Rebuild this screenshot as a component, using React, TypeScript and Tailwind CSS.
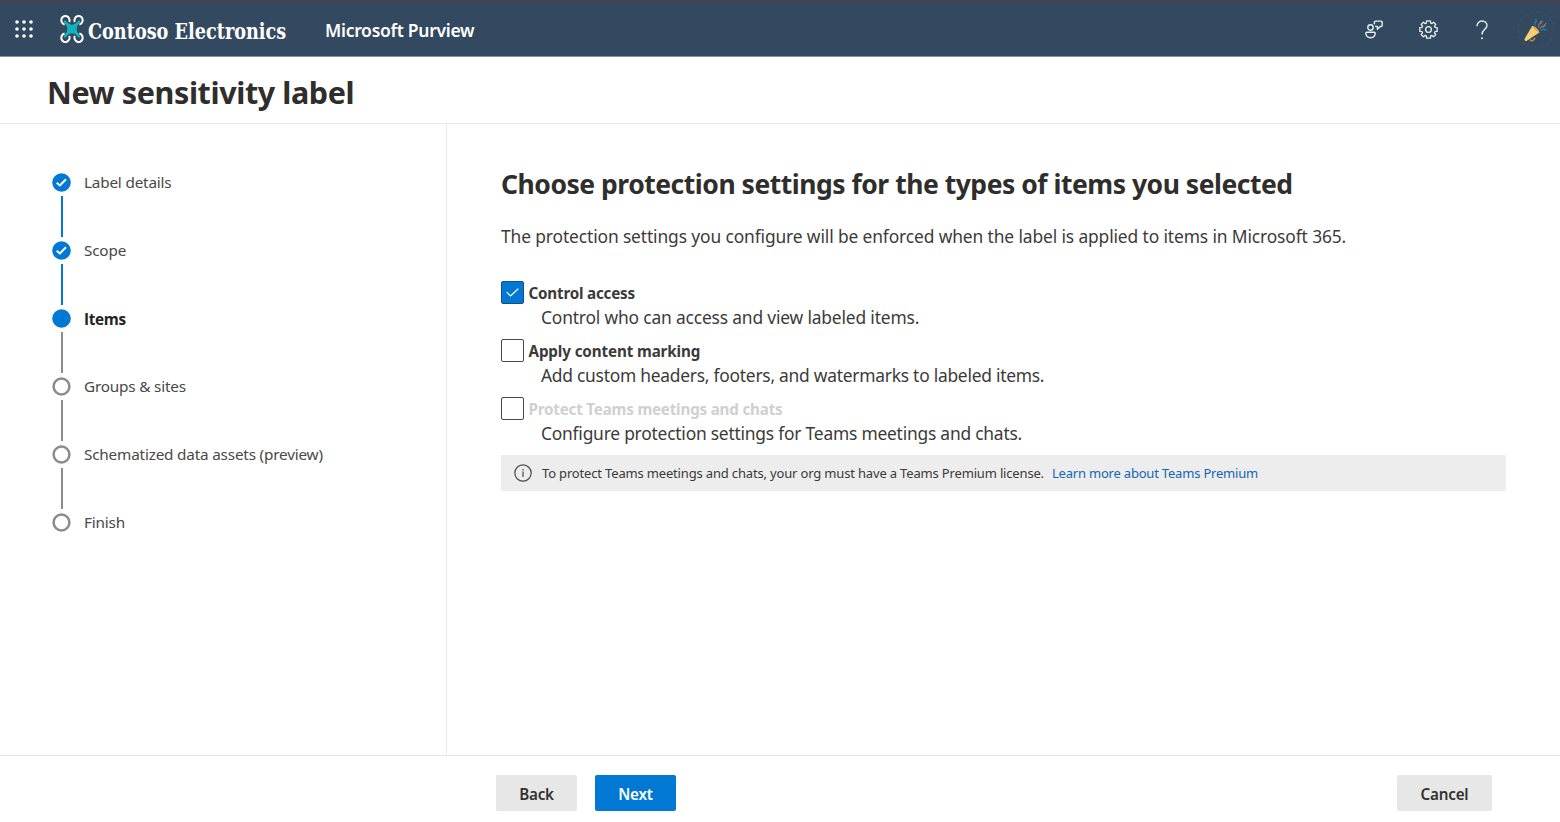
type StepState = "done" | "current" | "todo";

const steps: { label: string; state: StepState }[] = [
  { label: "Label details", state: "done" },
  { label: "Scope", state: "done" },
  { label: "Items", state: "current" },
  { label: "Groups & sites", state: "todo" },
  { label: "Schematized data assets (preview)", state: "todo" },
  { label: "Finish", state: "todo" },
];

const options = [
  {
    title: "Control access",
    text: "Control who can access and view labeled items.",
    checked: true,
    titleClass: "text-[#3b3a39] tracking-[-0.2px]",
    textClass: "tracking-[-0.17px]",
  },
  {
    title: "Apply content marking",
    text: "Add custom headers, footers, and watermarks to labeled items.",
    checked: false,
    titleClass: "text-[#3b3a39] tracking-[-0.12px]",
    textClass: "tracking-[-0.25px]",
  },
  {
    title: "Protect Teams meetings and chats",
    text: "Configure protection settings for Teams meetings and chats.",
    checked: false,
    titleClass: "text-[#d0d0d0] tracking-[-0.2px]",
    textClass: "tracking-[-0.22px]",
  },
];

function Waffle() {
  return (
    <svg width="18" height="18" viewBox="0 0 18 18" fill="#fff">
      {[2, 9, 16].map((y) => [2, 9, 16].map((x) => <circle key={`${x}-${y}`} cx={x} cy={y} r="1.8" />))}
    </svg>
  );
}

function DroneLogo() {
  return (
    <svg width="24" height="28" viewBox="0 0 24 28" fill="none">
      <g stroke="#fff" strokeWidth="2">
        <path d="M9.200 7A4.100 4.300 0 1 0 4.600 9.500" />
        <path d="M14.800 7A4.100 4.300 0 1 1 19.400 9.500" />
        <path d="M9.200 21A4.100 4.300 0 1 1 4.600 18.500" />
        <path d="M14.800 21A4.100 4.300 0 1 0 19.400 18.500" />
      </g>
      <path
        d="M5 6.300Q8.500 10.700 12 10.700T19 6.300L19.300 6.600Q15.600 10.500 15.600 14T19.300 21.400L19 21.700Q15.500 17.300 12 17.300T5 21.700L4.700 21.400Q8.400 17.500 8.400 14T4.700 6.600Z"
        fill="#12b5bd"
        stroke="#12b5bd"
        strokeWidth="1.800"
        strokeLinejoin="round"
      />
    </svg>
  );
}

function FeedbackIcon() {
  return (
    <svg width="18" height="19" viewBox="0 0 18 19" fill="none" stroke="#e8f0ee" strokeWidth="1.400" strokeLinejoin="round">
      <circle cx="5.500" cy="7.500" r="2.700" />
      <path d="M1.800 12.300H9.200C9.800 12.300 10.200 12.700 10.200 13.300C10.200 16 8.200 17.700 5.500 17.700S0.800 16 0.800 13.300C0.800 12.700 1.200 12.300 1.800 12.300Z" />
      <path d="M9.400 4.300V2.300C9.400 1.600 9.900 1.100 10.600 1.100H16C16.700 1.100 17.200 1.600 17.200 2.300V5.200C17.200 5.900 16.700 6.500 16 6.500H15.200L12.400 9.200V6.500C11.500 6.500 10.900 6.500 10.200 6.200" />
    </svg>
  );
}

function GearIcon() {
  return (
    <svg width="19" height="19" viewBox="0 0 20 20" fill="none" stroke="#e8f0ee" strokeWidth="1.400" strokeLinejoin="round">
      <path d="M8 0.900H12L12.300 3.200L13.600 3.700L15.400 2.300L17.700 4.600L16.300 6.400L16.800 7.700L19.100 8V12L16.800 12.300L16.300 13.600L17.700 15.400L15.400 17.700L13.600 16.300L12.300 16.800L12 19.100H8L7.700 16.800L6.400 16.300L4.600 17.700L2.300 15.400L3.700 13.600L3.200 12.300L0.900 12V8L3.200 7.700L3.700 6.400L2.300 4.600L4.600 2.300L6.400 3.700L7.700 3.200Z" />
      <circle cx="10" cy="10" r="3" />
    </svg>
  );
}

function HelpIcon() {
  return (
    <svg width="12" height="20" viewBox="0 0 12 20" fill="none" stroke="#e8f0ee" strokeWidth="1.400">
      <path d="M1 6.200C1 3.200 3.100 1 6 1S11 3 11 5.600C11 9.200 6 9.700 6 14.400" />
      <circle cx="6" cy="18.200" r="1" fill="#e8f0ee" stroke="none" />
    </svg>
  );
}

function PartyAvatar() {
  return (
    <svg width="40" height="40" viewBox="0 0 40 40" fill="none">
      <circle cx="20" cy="20" r="18" stroke="#3e5267" strokeWidth="1" strokeDasharray="5 1.500" />
      <path d="M14.200 29.500C14.600 31.500 18.200 31.200 18.800 27.800" stroke="#c9875c" strokeWidth="1.500" />
      <path d="M16.200 16C18 15.500 23.200 20.300 23.300 22.500L10.500 31C9.300 31.300 8.300 30.200 8.500 29Z" fill="#f6cf72" />
      <path d="M16.200 16C18 15.500 23.200 20.300 23.300 22.500C21 22.300 16.500 18.500 16.200 16Z" fill="#efa55e" />
      <g strokeWidth="1.400">
        <path d="M19.300 15.500L19 12.500L20.400 11L19.600 8.500" stroke="#1b8296" />
        <path d="M22.500 17.500L23 14L25 13.500L25.300 10.500" stroke="#a6527c" />
        <path d="M23.500 18.500L26 16.500L28.500 16L30 13" stroke="#438c72" />
        <path d="M24.500 20.500L27 19.200L30.500 20" stroke="#1b8296" />
        <path d="M24 12.800L26.500 11" stroke="#6ba04b" />
        <path d="M27 17.500L29 14.500" stroke="#b85680" />
      </g>
    </svg>
  );
}

function StepMark({ state }: { state: StepState }) {
  return (
    <svg width="19" height="19" viewBox="0 0 19 19" fill="none">
      {state === "todo" ? (
        <circle cx="9.500" cy="9.500" r="7.900" stroke="#8c8c8c" strokeWidth="2.500" />
      ) : (
        <circle cx="9.500" cy="9.500" r="9.300" fill="#0078d4" />
      )}
      {state === "done" && <path d="M4.700 9.700L7.900 12.500L14 6.300" stroke="#fff" strokeWidth="2" />}
    </svg>
  );
}

export default function App() {
  return (
    <div className="flex h-[822px] w-[1560px] flex-col overflow-hidden bg-white font-['Noto_Sans','Open_Sans',sans-serif] whitespace-nowrap text-[#323130]">
      <header className="flex h-[57px] shrink-0 items-center border-t border-b border-t-[#633641] border-b-[#8692a4] bg-[#32495f] pl-[15px] text-white">
        <Waffle />
        <div className="ml-[27px] flex items-center">
          <DroneLogo />
          <span className="ml-[4px] w-[237px] origin-left scale-x-[0.893] pt-[4px] font-['DejaVu_Serif_Condensed','DejaVu_Serif',serif] text-[22px] leading-7 font-bold">
            Contoso Electronics
          </span>
        </div>
        <span className="pt-[3px] text-[17.500px] leading-6 font-semibold tracking-[-0.28px]">Microsoft Purview</span>
        <div className="ml-auto flex items-center pt-[2px]">
          <FeedbackIcon />
          <span className="ml-9 flex">
            <GearIcon />
          </span>
          <span className="ml-[38px] flex">
            <HelpIcon />
          </span>
          <span className="mr-1 ml-7 flex">
            <PartyAvatar />
          </span>
        </div>
      </header>

      <div className="flex h-[67px] shrink-0 items-center border-b border-[#eaeaea] pt-[3px] pl-[47px]">
        <h1 className="text-[30.500px] leading-10 font-bold tracking-[-0.4px] text-[#2f2e2d]">New sensitivity label</h1>
      </div>

      <div className="flex min-h-0 flex-1">
        <nav className="w-[447px] shrink-0 border-r border-[#eaeaea] pt-[49px] pl-[52px]">
          {steps.map((s, i) => (
            <div key={s.label} className="flex h-[68px]">
              <div className="flex w-[19px] flex-col items-center">
                <StepMark state={s.state} />
                {i < steps.length - 1 && (
                  <div
                    className={`mt-1 ml-px h-[41px] w-[2px] ${s.state === "done" ? "bg-[#0078d4]" : "bg-[#8c8c8c]"}`}
                  />
                )}
              </div>
              <span
                className={`-mt-px ml-[13px] h-5 text-[15.300px] leading-5 ${
                  s.state === "current"
                    ? "pt-px font-['Open_Sans',sans-serif] font-bold tracking-[-0.3px] text-[#242322]"
                    : "tracking-[-0.19px] text-[#494846]"
                }`}
              >
                {s.label}
              </span>
            </div>
          ))}
        </nav>

        <main className="flex-1 pt-[42px] pr-[54px] pl-[54px]">
          <h2 className="text-[26.500px] leading-9 font-bold tracking-[-0.475px] text-[#2f2e2d]">
            Choose protection settings for the types of items you selected
          </h2>
          <p className="mt-5 text-[17.400px] leading-7 tracking-[-0.125px] text-[#3b3a39]">
            The protection settings you configure will be enforced when the label is applied to items in Microsoft 365.
          </p>
          <div className="mt-[31px]">
            {options.map((o) => (
              <div key={o.title} className="h-[58px]">
                <div className="flex h-[23px] items-center">
                  <span
                    className={`flex h-[23px] w-[23px] items-center justify-center rounded-[2px] border ${
                      o.checked ? "border-[#1d4f7c] bg-[#0078d4]" : "border-[#4a4948] bg-white"
                    }`}
                  >
                    {o.checked && (
                      <svg width="13" height="9" viewBox="0 0 13 9" fill="none" stroke="#fff" strokeWidth="1.200">
                        <path d="M0.700 4.200L4.500 8L12.300 0.700" />
                      </svg>
                    )}
                  </span>
                  <span className={`ml-[4.500px] text-[15.200px] leading-5 font-bold ${o.titleClass}`}>{o.title}</span>
                </div>
                <p className={`ml-10 text-[17.400px] leading-[26px] text-[#3b3a39] ${o.textClass}`}>{o.text}</p>
              </div>
            ))}
          </div>
          <div className="flex h-9 items-center bg-[#ededed] pt-px pl-[13px] text-[13px]">
            <svg className="-mt-px" width="18" height="18" viewBox="0 0 18 18" fill="none" stroke="#4a4948" strokeWidth="1.200">
              <circle cx="9" cy="9" r="8.200" />
              <path d="M9 7.600V13M9 5V6.400" />
            </svg>
            <span className="ml-[10px] pt-px tracking-[-0.165px] text-[#3b3a39]">
              To protect Teams meetings and chats, your org must have a Teams Premium license.
            </span>
            <a className="ml-2 pt-px tracking-[-0.2px] text-[#1267b4]">Learn more about Teams Premium</a>
          </div>
        </main>
      </div>

      <footer className="flex h-[67px] shrink-0 items-start border-t border-[#e6e6e6] pt-[19px] pr-[68px] pl-[496px] text-[15.200px] font-semibold tracking-[-0.2px]">
        <button className="h-9 w-[81px] rounded-[2px] bg-[#e7e7e7] pt-[3px]">Back</button>
        <button className="ml-[18px] h-9 w-[81px] rounded-[2px] bg-[#0078d4] pt-[3px] text-white">Next</button>
        <button className="ml-auto h-9 w-[95px] rounded-[2px] bg-[#e7e7e7] pt-[3px]">Cancel</button>
      </footer>
    </div>
  );
}
